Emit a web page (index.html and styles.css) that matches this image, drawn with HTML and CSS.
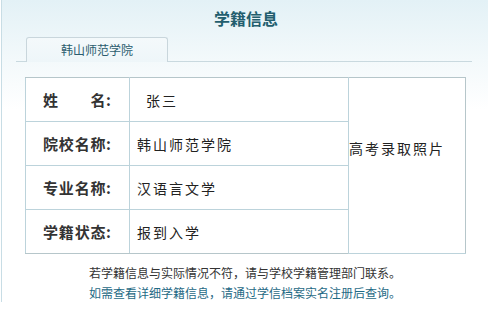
FILE: index.html
```html
<!DOCTYPE html>
<html lang="zh-CN">
<head>
<meta charset="utf-8">
<title>学籍信息</title>
<link rel="stylesheet" href="styles.css">
</head>
<body>
<div class="page">
  <h1 class="title">学籍信息</h1>
  <div class="tabs">
    <div class="tab">韩山师范学院</div>
  </div>
  <table class="info">
    <colgroup>
      <col class="c-label">
      <col class="c-value">
      <col class="c-photo">
    </colgroup>
    <tr>
      <th><span class="lbl">姓名</span>:</th>
      <td class="val"><span class="lead">张三</span></td>
      <td class="photo" rowspan="4"><span class="photo-txt">高考录取照片</span></td>
    </tr>
    <tr>
      <th><span class="lbl">院校名称</span>:</th>
      <td class="val">韩山师范学院</td>
    </tr>
    <tr>
      <th><span class="lbl">专业名称</span>:</th>
      <td class="val">汉语言文学</td>
    </tr>
    <tr>
      <th><span class="lbl">学籍状态</span>:</th>
      <td class="val">报到入学</td>
    </tr>
  </table>
  <div class="notes">
    <p class="note">若学籍信息与实际情况不符，请与学校学籍管理部门联系。</p>
    <p class="note link">如需查看详细学籍信息，请通过学信档案实名注册后查询。</p>
  </div>
</div>
</body>
</html>
```
FILE: styles.css
```css
html, body {
  margin: 0;
  padding: 0;
  background: #fff;
}
body {
  font-family: "Noto Sans CJK SC", "Noto Sans", sans-serif;
  color: #333;
}
.page {
  margin-left: 1px;
  width: 486px;
  height: 302px;
  border-left: 1px solid #c8dde5;
  background: linear-gradient(to bottom, #e3f1f6 0px, #f3f9fb 60px, #ffffff 110px);
  overflow: hidden;
}
.title {
  margin: 0;
  height: 37px;
  line-height: 36px;
  font-size: 16px;
  font-weight: bold;
  color: #235e6e;
  text-align: center;
  padding-left: 2px;
}
.tabs {
  margin-left: 14px;
  width: 456px;
  height: 24px;
  border-bottom: 1px solid #c9d9df;
  display: flex;
}
.tab {
  margin-left: 10px;
  width: 140px;
  height: 24px;
  border: 1px solid #c9d6dc;
  border-bottom: none;
  border-radius: 3px 3px 0 0;
  background: linear-gradient(to bottom, #f4f9fb, #eef6f9);
  font-size: 12px;
  line-height: 24px;
  text-align: center;
  color: #2b5c6e;
  margin-bottom: -1px;
  position: relative;
}
.info {
  margin: 15px 0 0 23px;
  width: 440px;
  table-layout: fixed;
  border-collapse: collapse;
  border: 1px solid #b6c6ca;
  background: #fff;
}
.c-label { width: 104px; }
.c-value { width: 219px; }
.c-photo { width: 117px; }
.info th, .info td {
  border: 1px solid #bcd3db;
  height: 43px;
  padding: 0;
}
.info tr:first-child > * { border-top-color: #b6c6ca; }
.info tr:last-child > * { border-bottom-color: #b6c6ca; }
.info th {
  text-align: left;
  padding-left: 17px;
  font-size: 15px;
  font-weight: bold;
  color: #333;
  white-space: nowrap;
}
.lbl {
  display: inline-block;
  width: 63px;
  text-align: justify;
  text-align-last: justify;
  letter-spacing: 0.5px;
}
.val {
  padding-left: 7px !important;
  font-size: 14px;
  letter-spacing: 2px;
  color: #222;
  white-space: nowrap;
}
.lead {
  margin-left: 9px;
}
.photo {
  vertical-align: middle;
  font-size: 14px;
  letter-spacing: 2px;
  color: #222;
  border-right-color: #b6c6ca !important;
}
.photo-txt {
  display: block;
  padding-bottom: 36px;
  white-space: nowrap;
}
.notes {
  margin-top: 9px;
  text-align: center;
}
.note {
  margin: 0;
  font-size: 12px;
  line-height: 20px;
  color: #333;
}
.note.link {
  color: #1f6a85;
}
```
